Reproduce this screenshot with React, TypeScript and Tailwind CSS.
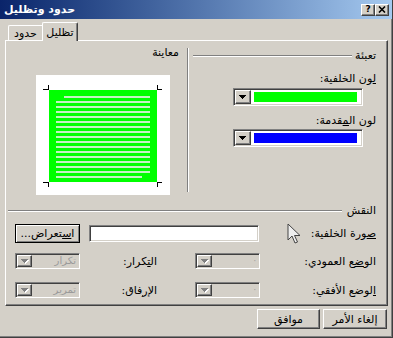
import type { ReactNode } from "react";

const raised =
  "border-t border-l border-t-white border-l-white border-r border-b border-r-[#404040] border-b-[#404040] shadow-[inset_-1px_-1px_0_#808080] bg-[#d4d0c8]";
const sunken =
  "border-t border-l border-t-[#808080] border-l-[#808080] border-r border-b border-r-white border-b-white shadow-[inset_1px_1px_0_#404040,inset_-1px_-1px_0_#d4d0c8] p-[1px]";

function Arrow({ disabled }: { disabled?: boolean }) {
  return (
    <svg width="8" height="5" viewBox="0 0 8 5" shapeRendering="crispEdges">
      {disabled && <path d="M1 1h7v1H7v1H6v1H5v1H4V4H3V3H2V2H1z" fill="#fff" />}
      <path
        d="M0 0h7v1H6v1H5v1H4v1H3V3H2V2H1V1H0z"
        fill={disabled ? "#808080" : "#000"}
      />
    </svg>
  );
}

function Etched({ className = "" }: { className?: string }) {
  return <div className={`h-[2px] border-t border-t-[#808080] border-b border-b-white ${className}`} />;
}

function Label({ children, className = "" }: { children: ReactNode; className?: string }) {
  return (
    <div dir="rtl" className={`h-[13px] whitespace-nowrap ${className}`}>
      {children}
    </div>
  );
}

function ColorCombo({ color }: { color: string }) {
  return (
    <div className={`flex h-[18px] w-[130px] bg-white ${sunken}`}>
      <div className={`flex w-[16px] items-center justify-center ${raised}`}>
        <Arrow />
      </div>
      <div className="my-[2px] ml-[3px] mr-[4px] flex-1" style={{ background: color }} />
    </div>
  );
}

function DisabledCombo({ text, className = "" }: { text?: string; className?: string }) {
  return (
    <div className={`flex h-[16px] w-[65px] bg-[#d4d0c8] ${sunken} ${className}`}>
      <div className={`flex w-[15px] items-center justify-center ${raised}`}>
        <Arrow disabled />
      </div>
      <div dir="rtl" className="flex-1 pr-[2px] text-[10px] leading-[12px] text-[#9a9a9a]">
        {text ?? <span className="text-[8px]">·</span>}
      </div>
    </div>
  );
}

function Preview() {
  const lines = Array.from({ length: 17 });
  return (
    <div className="relative mt-[16px] ml-[30px] h-[120px] w-[134px] bg-white pl-[13px] pt-[15px]">
      <div className="flex h-[92px] w-[108px] flex-col gap-[3px] bg-[#00ff00] px-[7px] pt-[6px]">
        {lines.map((_, i) => (
          <div
            key={i}
            className={`h-[2px] bg-[#c4f2c4] ${i === 0 ? "ml-[8px]" : i === 16 ? "mr-[8px]" : ""}`}
          />
        ))}
      </div>
      <svg className="absolute left-0 top-0" width="134" height="120" shapeRendering="crispEdges">
        <path
          d="M12 10v5M7 14h5M121 10v5M121 14h5M12 107v5M7 107h5M121 107v5M121 107h5"
          stroke="#000"
          strokeWidth="1"
        />
      </svg>
    </div>
  );
}

export default function App() {
  return (
    <div className="relative flex h-[338px] w-[393px] flex-col overflow-hidden border-r border-b border-r-[#404040] border-b-[#404040] bg-[#d4d0c8] font-['DejaVu_Sans',sans-serif] text-[11px] leading-[13px] text-black shadow-[inset_-1px_-1px_0_#808080]">
      {/* title bar */}
      <div className="flex h-[19px] shrink-0 items-center justify-between bg-linear-to-r from-[#0a246a] to-[#a6caf0] pl-[4px] pr-[3px]">
        <span dir="rtl" className="font-bold text-white">
          حدود وتظليل
        </span>
        <div className="flex">
          <div className={`flex h-[12px] w-[14px] items-center justify-center text-[9px] font-bold leading-none ${raised}`}>
            ?
          </div>
          <div className={`flex h-[12px] w-[14px] items-center justify-center ${raised}`}>
            <svg width="8" height="7" viewBox="0 0 8 7">
              <path d="M1 0.5l6 6M7 0.5l-6 6" stroke="#000" strokeWidth="1.6" />
            </svg>
          </div>
        </div>
      </div>

      <div className="pl-[5px]">
        {/* tabs */}
        <div className="flex h-[21px] items-end pl-[3px]">
          <div className="flex h-[15px] w-[34px] items-center justify-center rounded-tl-[2px] border-t border-l border-white">
            <span dir="rtl">حدود</span>
          </div>
          <div className="relative z-10 -mb-[1px] flex h-[19px] w-[36px] items-start justify-center rounded-t-[2px] border-t border-l border-r border-t-white border-l-white border-r-[#404040] bg-[#d4d0c8] pt-[3px] shadow-[inset_-1px_0_0_#808080]">
            <span dir="rtl">تظليل</span>
          </div>
        </div>

        {/* tab panel */}
        <div className="flex h-[266px] w-[383px] flex-col border-t border-l border-t-white border-l-white border-r border-b border-r-[#404040] border-b-[#404040] shadow-[inset_-1px_-1px_0_#808080]">
          <div className="flex h-[159px] pt-[5px]">
            <div className="flex w-[181px] flex-col">
              <Label className="pr-[8px]">معاينة</Label>
              <Preview />
            </div>
            <div className="mt-[2px] h-[144px] w-[2px] border-l border-l-[#808080] border-r border-r-white" />
            <div className="flex flex-1 flex-col">
              <div className="mt-[3px] flex h-[13px] items-center pl-[4px] pr-[11px]">
                <Etched className="flex-1" />
                <Label className="ml-[3px]">تعبئة</Label>
              </div>
              <Label className="mt-[10px] pr-[11px]">
                <u>ل</u>ون الخلفية:
              </Label>
              <div className="mt-[3px] mr-[24px] self-end">
                <ColorCombo color="#00ff00" />
              </div>
              <Label className="mt-[8px] pr-[11px]">
                لون ال<u>م</u>قدمة:
              </Label>
              <div className="mt-[2px] mr-[24px] self-end">
                <ColorCombo color="#0000ff" />
              </div>
            </div>
          </div>

          <div className="mt-[4px] flex h-[13px] items-center justify-between pl-[2px] pr-[11px]">
            <Etched className="w-[334px]" />
            <Label>النقش</Label>
          </div>

          <div className="mt-[7px] flex h-[19px] items-center">
            <div className="ml-[9px] flex h-[19px] w-[65px] items-center justify-center border border-black bg-[#d4d0c8] shadow-[inset_1px_1px_0_#fff,inset_-1px_-1px_0_#808080]">
              <span dir="rtl">
                ا<u>س</u>تعراض...
              </span>
            </div>
            <div className={`ml-[9px] h-[17px] w-[170px] bg-white ${sunken}`} />
            <Label className="flex-1 pr-[11px]">
              <u>ص</u>ورة الخلفية:
            </Label>
          </div>

          <div className="mt-[10px] flex h-[16px] items-center">
            <DisabledCombo text="تكرار" className="ml-[9px]" />
            <Label className="w-[77px]">
              ال<u>ت</u>كرار:
            </Label>
            <DisabledCombo className="ml-[38px]" />
            <Label className="flex-1 pr-[11px]">
              الو<u>ض</u>ع العمودي:
            </Label>
          </div>

          <div className="mt-[13px] flex h-[16px] items-center">
            <DisabledCombo text="تمرير" className="ml-[9px]" />
            <Label className="w-[77px]">
              الإ<u>ر</u>فاق:
            </Label>
            <DisabledCombo className="ml-[38px]" />
            <Label className="flex-1 pr-[11px]">
              <u>ا</u>لوضع الأفقي:
            </Label>
          </div>
        </div>
      </div>

      {/* dialog buttons */}
      <div className="mt-[3px] flex justify-end gap-[3px] pr-[5px]">
        <div className={`flex h-[20px] w-[63px] items-center justify-center ${raised}`}>
          <span dir="rtl">موافق</span>
        </div>
        <div className={`flex h-[20px] w-[64px] items-center justify-center ${raised}`}>
          <span dir="rtl">
            <u>إ</u>لغاء الأمر
          </span>
        </div>
      </div>

      {/* mouse pointer */}
      <svg className="absolute left-[287px] top-[223px]" width="14" height="22" viewBox="0 0 14 22">
        <path
          d="M1 1v16l4-4 3 7 2.5-1-3-6.5H13z"
          fill="#eeeeee"
          stroke="#444"
          strokeWidth="1"
          strokeLinejoin="round"
        />
      </svg>
    </div>
  );
}
